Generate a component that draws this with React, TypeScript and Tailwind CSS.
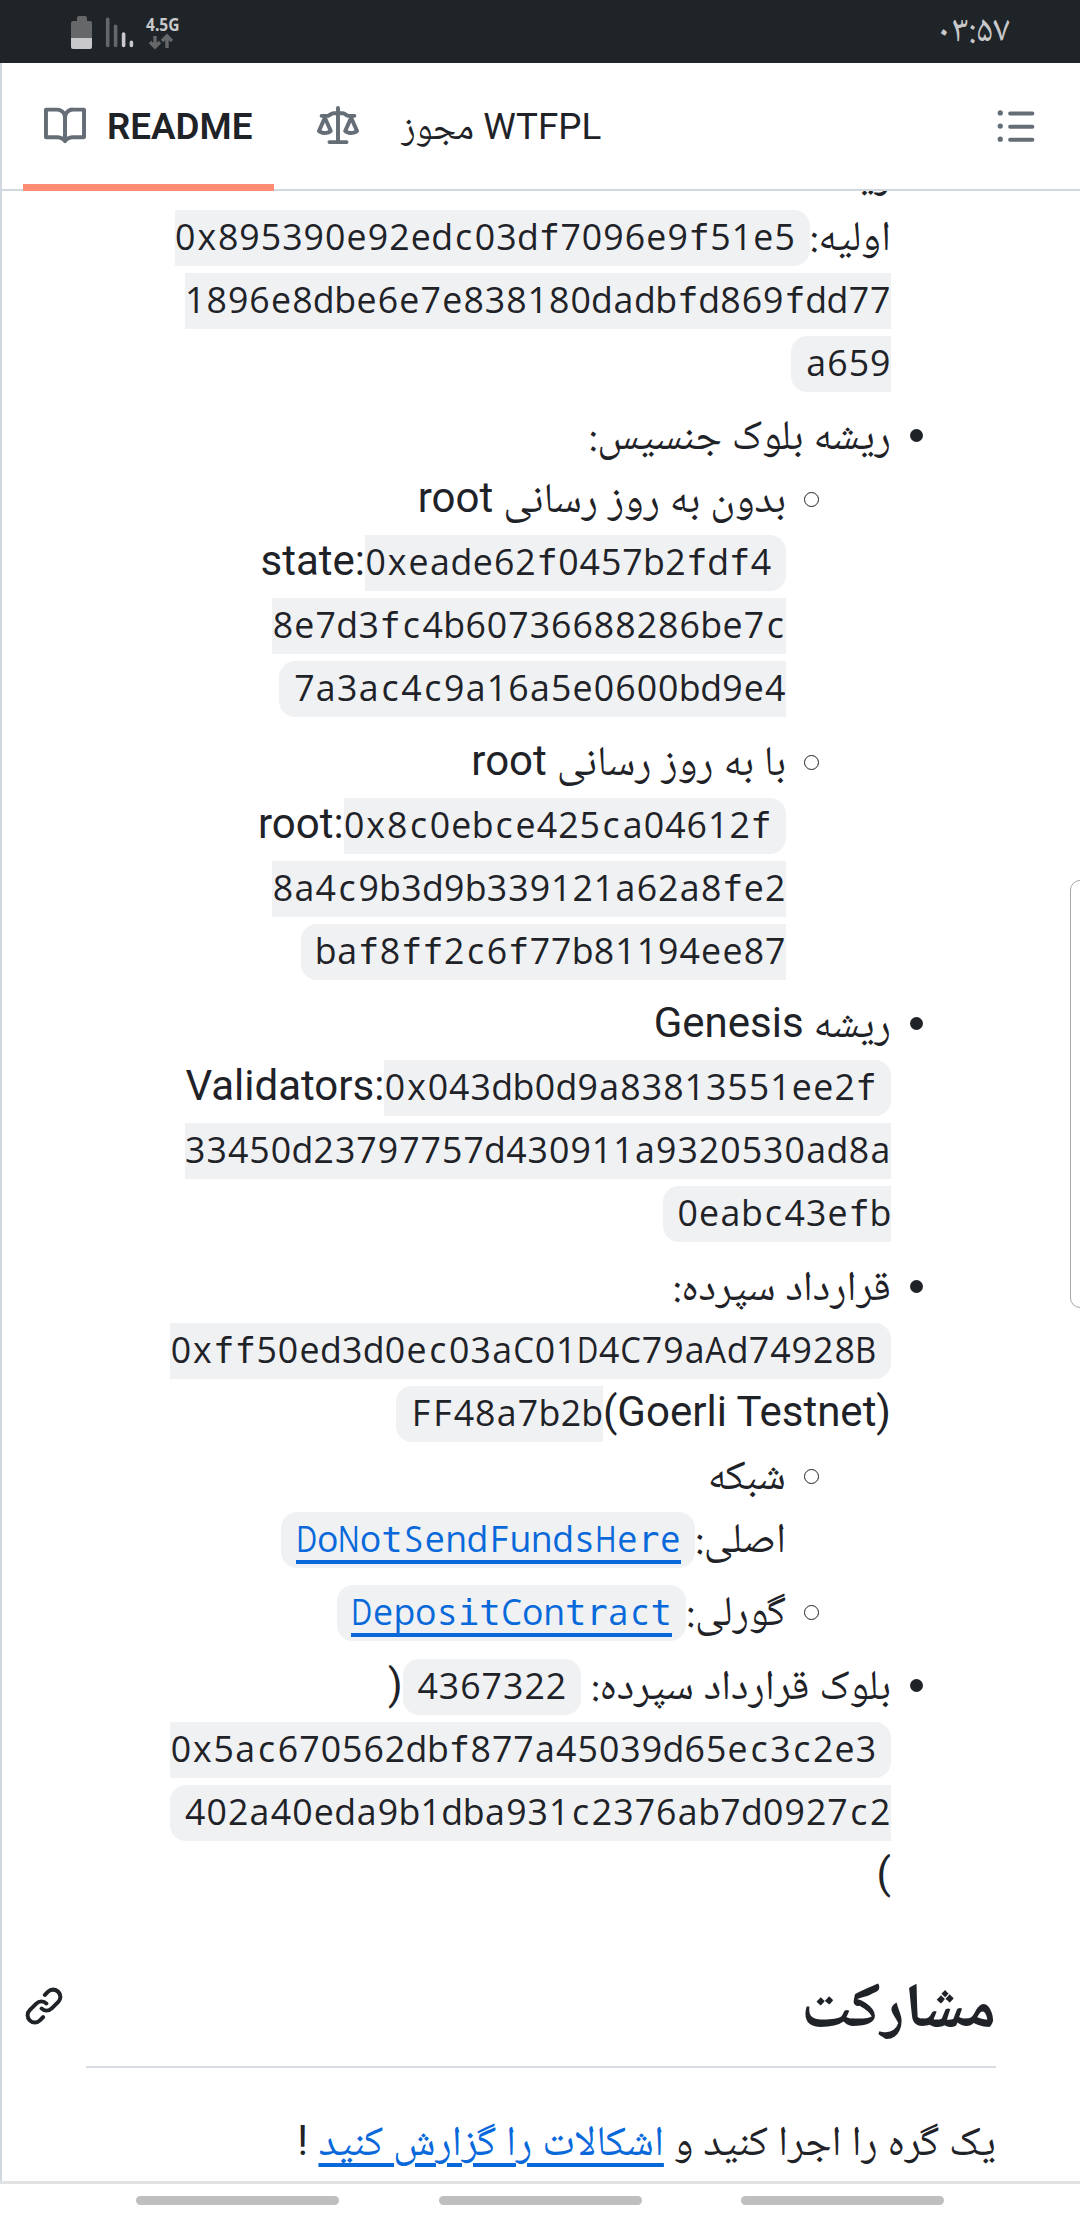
import React from 'react';

const ICONS = {
  book: 'M0 1.75A.75.75 0 0 1 .75 1h4.253c1.227 0 2.317.59 3 1.501A3.743 3.743 0 0 1 11.006 1h4.245a.75.75 0 0 1 .75.75v10.5a.75.75 0 0 1-.75.75h-4.507a2.25 2.25 0 0 0-1.591.659l-.622.621a.75.75 0 0 1-1.06 0l-.622-.621A2.25 2.25 0 0 0 5.258 13H.75a.75.75 0 0 1-.75-.75Zm7.251 10.324.004-5.073-.002-2.253A2.25 2.25 0 0 0 5.003 2.5H1.5v9h3.757a3.75 3.75 0 0 1 1.994.574ZM8.755 4.75l-.004 7.322a3.752 3.752 0 0 1 1.992-.572H14.5v-9h-3.495a2.25 2.25 0 0 0-2.25 2.25Z',
  law: 'M8.75.75V2h.985c.304 0 .603.08.867.231l1.29.736c.038.022.08.033.124.033h2.234a.75.75 0 0 1 0 1.5h-.427l2.111 4.692a.75.75 0 0 1-.154.838l-.53-.53.529.531-.001.002-.002.002-.006.006-.006.005-.01.01-.045.04c-.21.176-.441.327-.686.45C14.556 10.78 13.88 11 13 11a4.498 4.498 0 0 1-2.023-.454 3.544 3.544 0 0 1-.686-.45l-.045-.04-.016-.015-.006-.006-.004-.004v-.001a.75.75 0 0 1-.154-.838L12.178 4.5h-.162c-.305 0-.604-.079-.868-.231l-1.29-.736a.245.245 0 0 0-.124-.033H8.75V13h2.5a.75.75 0 0 1 0 1.5h-6.5a.75.75 0 0 1 0-1.5h2.5V3.5h-.984a.245.245 0 0 0-.124.033l-1.289.737c-.265.15-.564.23-.869.23h-.162l2.112 4.692a.75.75 0 0 1-.154.838l-.53-.53.529.531-.001.002-.002.002-.006.006-.016.015-.045.04c-.21.176-.441.327-.686.45C4.556 10.78 3.88 11 3 11a4.498 4.498 0 0 1-2.023-.454 3.544 3.544 0 0 1-.686-.45l-.045-.04-.016-.015-.006-.006-.004-.004v-.001a.75.75 0 0 1-.154-.838L2.178 4.5H1.75a.75.75 0 0 1 0-1.5h2.234a.249.249 0 0 0 .125-.033l1.288-.737c.265-.15.564-.23.869-.23h.984V.75a.75.75 0 0 1 1.5 0Zm2.945 8.477c.285.135.718.273 1.305.273s1.02-.138 1.305-.273L13 6.327Zm-10 0c.285.135.718.273 1.305.273s1.02-.138 1.305-.273L3 6.327Z',
  list: 'M5.75 2.5h8.5a.75.75 0 0 1 0 1.5h-8.5a.75.75 0 0 1 0-1.5Zm0 5h8.5a.75.75 0 0 1 0 1.5h-8.5a.75.75 0 0 1 0-1.5Zm0 5h8.5a.75.75 0 0 1 0 1.5h-8.5a.75.75 0 0 1 0-1.5ZM2 14a1 1 0 1 1 0-2 1 1 0 0 1 0 2Zm1-6a1 1 0 1 1-2 0 1 1 0 0 1 2 0ZM2 4a1 1 0 1 1 0-2 1 1 0 0 1 0 2Z',
  link: 'm7.775 3.275 1.25-1.25a3.5 3.5 0 1 1 4.95 4.95l-2.5 2.5a3.5 3.5 0 0 1-4.95 0 .751.751 0 0 1 .018-1.042.751.751 0 0 1 1.042-.018 1.998 1.998 0 0 0 2.83 0l2.5-2.5a2.002 2.002 0 0 0-2.83-2.83l-1.25 1.25a.751.751 0 0 1-1.042-.018.751.751 0 0 1-.018-1.042Zm-4.69 9.64a1.998 1.998 0 0 0 2.83 0l1.25-1.25a.751.751 0 0 1 1.042.018.751.751 0 0 1 .018 1.042l-1.25 1.25a3.5 3.5 0 1 1-4.95-4.95l2.5-2.5a3.5 3.5 0 0 1 4.95 0 .751.751 0 0 1-.018 1.042.751.751 0 0 1-1.042.018 1.998 1.998 0 0 0-2.83 0l-2.5 2.5a1.998 1.998 0 0 0 0 2.83Z',
};

function Icon({ d, className }: { d: string; className: string }) {
  return (
    <svg viewBox="0 0 16 16" fill="currentColor" className={`size-[42px] shrink-0 ${className}`}>
      <path d={d} />
    </svg>
  );
}

type Edge = 'left' | 'right' | 'both' | 'none';
const EDGES: Record<Edge, string> = {
  left: 'rounded-l-[16px] pl-[14.3px]',
  right: 'rounded-r-[16px] pr-[14.3px]',
  both: 'rounded-[16px] px-[14.3px]',
  none: '',
};

/* Letters with serifs in a monospaced face, and capitals too wide for a cell, get their own style. */
function cellClass(c: string) {
  if (/[firt]/.test(c)) return "inline-flex w-[21.42px] justify-center font-['DejaVu_Sans_Mono',monospace]";
  if (/[DNH]/.test(c)) return 'inline-flex w-[21.42px] justify-center scale-x-[0.82]';
  if (/[ABCS]/.test(c)) return 'inline-flex w-[21.42px] justify-center scale-x-[0.92]';
  return 'inline-flex w-[21.42px] justify-center';
}

function Cells({ text }: { text: string }) {
  return (
    <>
      {text.split('').map((c, i) => (
        <span key={i} className={cellClass(c)}>{c}</span>
      ))}
    </>
  );
}

function Code({ text, edge = 'none' }: { text: string; edge?: Edge }) {
  return (
    <code
      dir="ltr"
      className={`inline-block h-[56px] bg-[#eff1f3] align-baseline font-['Open_Sans',sans-serif] text-[35.7px] leading-[52px] ${EDGES[edge]}`}
    >
      <Cells text={text} />
    </code>
  );
}

function CodeLink({ text }: { text: string }) {
  return (
    <code
      dir="ltr"
      className="inline-block h-[56px] rounded-[16px] bg-[#eff1f3] px-[14.3px] align-baseline font-['Open_Sans',sans-serif] text-[35.7px] leading-[52px] text-[#0969da]"
    >
      <a className="inline-block h-[52px] border-b-4 border-[#0969da]">
        <Cells text={text} />
      </a>
    </code>
  );
}

function Row({ children, ltr = false }: { children: React.ReactNode; ltr?: boolean }) {
  return (
    <div dir={ltr ? 'ltr' : 'rtl'} className="h-[63px] text-right leading-[63px] whitespace-pre">
      {children}
    </div>
  );
}

function Fa({ children }: { children: string }) {
  return <span className="font-['Noto_Naskh_Arabic','DejaVu_Sans',sans-serif] leading-none [word-spacing:0.6px]">{children}</span>;
}

function Item({ children, nested = false, className = '' }: { children: React.ReactNode; nested?: boolean; className?: string }) {
  return (
    <li className={`relative ${nested ? 'mr-[105px]' : ''} ${className}`}>
      <span
        className={
          nested
            ? 'absolute top-[26px] -right-[33px] size-[15px] rounded-full border-[1.5px] border-[#1f2328]'
            : 'absolute top-[26px] -right-[32px] size-[13px] rounded-full bg-[#1f2328]'
        }
      />
      {children}
    </li>
  );
}

function StatusBar() {
  return (
    <div className="flex h-[63px] shrink-0 items-start justify-between bg-[#1f2428] pr-[70px] pl-[71px] text-[#c9c9cb]">
      <svg width="110" height="50" viewBox="71 0 110 50">
        <path d="M77 21v-3a2 2 0 0 1 2-2h6a2 2 0 0 1 2 2v3h3a2 2 0 0 1 2 2v15H71V23a2 2 0 0 1 2-2z" fill="#656769" />
        <path d="M71 38h21v9a2 2 0 0 1-2 2H73a2 2 0 0 1-2-2z" fill="#c9c9cb" />
        <g strokeWidth="3.6" strokeLinecap="round">
          <path d="M107.7 19.3V45.5M115.6 26.3V45.5" stroke="#656769" />
          <path d="M123.6 34V45.5M131.4 42.3V45.5" stroke="#c9c9cb" />
        </g>
        <path d="M155 36v11M150 42l5 5 5-5M167 48V37M162 41l5-5 5 5" fill="none" stroke="#656769" strokeWidth="3.4" />
        <text x="146" y="31" fontSize="18" fontWeight="700" fill="#c9c9cb" fontFamily="Noto Sans" textLength="33.5" lengthAdjust="spacingAndGlyphs">4.5G</text>
      </svg>
      <span className="font-['Noto_Naskh_Arabic','DejaVu_Sans',sans-serif] text-[37.5px] leading-[66px]">۰۳:۵۷</span>
    </div>
  );
}

function TabBar() {
  return (
    <div className="flex h-[128px] shrink-0 items-start border-b-2 border-[#d0d7de] pt-[42px] pr-[43px] pl-[42px] text-[#656d76]">
      <div className="relative flex">
        <Icon d={ICONS.book} className="" />
        <span className="mt-px ml-[21px] text-[36.75px] leading-[42px] font-semibold text-[#1f2328]">README</span>
        <span className="absolute top-[79px] -left-[21px] h-[7px] w-[251px] bg-[#fd8c73]" />
      </div>
      <Icon d={ICONS.law} className="mt-px ml-[65px]" />
      <span dir="ltr" className="mt-px ml-[42px] text-[36.75px] leading-[42px] whitespace-pre text-[#1f2328]">
        <Fa>مجوز</Fa> WTFPL
      </span>
      <Icon d={ICONS.list} className="ml-auto" />
    </div>
  );
}

export default function App() {
  return (
    <div className="relative flex h-[2220px] w-[1080px] flex-col overflow-hidden bg-white font-['Roboto',sans-serif] text-[42px] text-[#1f2328]">
      <StatusBar />
      <div className="flex h-[2118px] shrink-0 flex-col overflow-hidden border-l-2 border-[#d0d7de]">
        <TabBar />
        <div className="min-h-0 flex-1 overflow-hidden">
          <ul className="-mt-[50.5px] mr-[189px]">
            <li>
              <Row><Fa>ریشه</Fa></Row>
              <Row><Fa>اولیه:</Fa><Code edge="right" text="0x895390e92edc03df7096e9f51e5" /></Row>
              <Row><Code text="1896e8dbe6e7e838180dadbfd869fdd77" /></Row>
              <Row><Code edge="left" text="a659" /></Row>
            </li>
            <Item className="mt-[10.5px]">
              <Row><Fa>ریشه بلوک جنسیس:</Fa></Row>
              <ul>
                <Item nested>
                  <Row><Fa>بدون به روز رسانی </Fa>root</Row>
                  <Row ltr>state:<Code edge="right" text="0xeade62f0457b2fdf4" /></Row>
                  <Row><Code text="8e7d3fc4b60736688286be7c" /></Row>
                  <Row><Code edge="left" text="7a3ac4c9a16a5e0600bd9e4" /></Row>
                </Item>
                <Item nested className="mt-[10.5px]">
                  <Row><Fa>با به روز رسانی </Fa>root</Row>
                  <Row ltr>root:<Code edge="right" text="0x8c0ebce425ca04612f" /></Row>
                  <Row><Code text="8a4c9b3d9b339121a62a8fe2" /></Row>
                  <Row><Code edge="left" text="baf8ff2c6f77b81194ee87" /></Row>
                </Item>
              </ul>
            </Item>
            <Item className="mt-[10.5px]">
              <Row><Fa>ریشه </Fa>Genesis</Row>
              <Row ltr>Validators:<Code edge="right" text="0x043db0d9a83813551ee2f" /></Row>
              <Row><Code text="33450d23797757d430911a9320530ad8a" /></Row>
              <Row><Code edge="left" text="0eabc43efb" /></Row>
            </Item>
            <Item className="mt-[10.5px]">
              <Row><Fa>قرارداد سپرده:</Fa></Row>
              <Row><Code edge="right" text="0xff50ed3d0ec03aC01D4C79aAd74928B" /></Row>
              <Row ltr><Code edge="left" text="FF48a7b2b" />(Goerli Testnet)</Row>
              <ul>
                <Item nested>
                  <Row><Fa>شبکه</Fa></Row>
                  <Row><Fa>اصلی:</Fa><CodeLink text="DoNotSendFundsHere" /></Row>
                </Item>
                <Item nested className="mt-[10.5px]">
                  <Row><Fa>گورلی:</Fa><CodeLink text="DepositContract" /></Row>
                </Item>
              </ul>
            </Item>
            <Item className="mt-[10.5px]">
              <Row><Fa>بلوک قرارداد سپرده: </Fa><Code edge="both" text="4367322" />(</Row>
              <Row><Code edge="right" text="0x5ac670562dbf877a45039d65ec3c2e3" /></Row>
              <Row><Code edge="left" text="402a40eda9b1dba931c2376ab7d0927c2" /></Row>
              <Row>)</Row>
            </Item>
          </ul>
          <div className="mt-[63px] mr-[84px] ml-[84px] flex h-[100.5px] flex-row-reverse items-start justify-between border-b-2 border-[#d8dee4]">
            <h2 dir="rtl" className="text-[63px] leading-[75px] font-bold"><Fa>مشارکت</Fa></h2>
            <Icon d={ICONS.link} className="mt-[17px] -ml-[63px]" />
          </div>
          <div className="mt-[41px] mr-[84px]">
            <Row>
              <Fa>یک گره را اجرا کنید و </Fa>
              <a className="text-[#0969da] underline decoration-[4px] underline-offset-[8px]"><Fa>اشکالات را گزارش کنید</Fa></a> !
            </Row>
          </div>
        </div>
      </div>
      <div className="flex flex-1 justify-between border-t-[3px] border-[#e2e2e2] px-[136px] pt-[12px]">
        <span className="h-[9px] w-[203px] rounded-full bg-[#bfbfbf]" />
        <span className="h-[9px] w-[203px] rounded-full bg-[#bfbfbf]" />
        <span className="h-[9px] w-[203px] rounded-full bg-[#bfbfbf]" />
      </div>
      <div className="absolute top-[880px] -right-[10px] h-[428px] w-[20px] rounded-[14px] border border-[#a8a8a8]" />
    </div>
  );
}
